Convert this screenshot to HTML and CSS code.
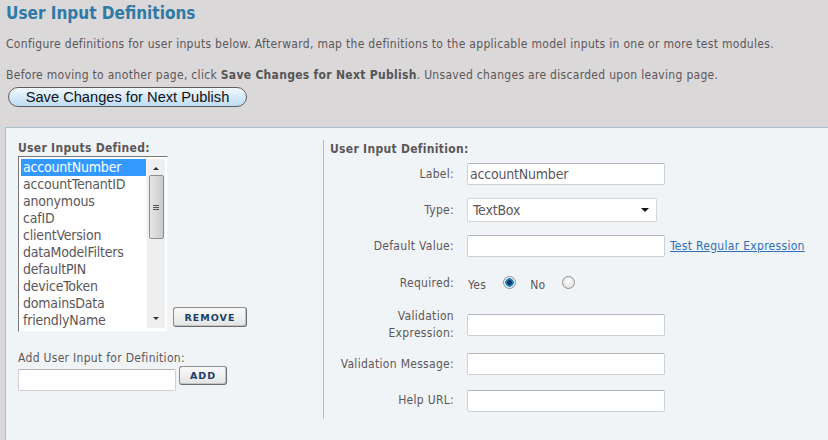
FILE: index.html
```html
<!DOCTYPE html>
<html lang="en">
<head>
<meta charset="utf-8">
<title>User Input Definitions</title>
<link rel="stylesheet" href="styles.css">
</head>
<body>
<header class="intro">
  <h1 class="title">User Input Definitions</h1>
  <p class="note">Configure definitions for user inputs below. Afterward, map the definitions to the applicable model inputs in one or more test modules.</p>
  <p class="note note-save">Before moving to another page, click <b>Save Changes for Next Publish</b>. Unsaved changes are discarded upon leaving page.</p>
  <button class="save-btn" type="button">Save Changes for Next Publish</button>
</header>

<section class="panel">
  <div class="col-left">
    <div class="heading">User Inputs Defined:</div>
    <div class="list-row">
      <div class="listbox">
        <ul class="items">
          <li class="item selected">accountNumber</li>
          <li class="item">accountTenantID</li>
          <li class="item">anonymous</li>
          <li class="item">cafID</li>
          <li class="item">clientVersion</li>
          <li class="item">dataModelFilters</li>
          <li class="item">defaultPIN</li>
          <li class="item">deviceToken</li>
          <li class="item">domainsData</li>
          <li class="item">friendlyName</li>
        </ul>
        <div class="scrollbar">
          <div class="arrow arrow-up"></div>
          <div class="thumb"><span class="grip"></span><span class="grip"></span><span class="grip"></span></div>
          <div class="track"></div>
          <div class="arrow arrow-down"></div>
        </div>
      </div>
      <button class="img-btn remove-btn" type="button">REMOVE</button>
    </div>
    <div class="add-label">Add User Input for Definition:</div>
    <div class="add-row">
      <input class="field add-field" type="text">
      <button class="img-btn add-btn" type="button">ADD</button>
    </div>
  </div>

  <div class="col-right">
    <div class="heading">User Input Definition:</div>
    <div class="form">
      <label class="lbl">Label:</label>
      <div class="ctl"><input class="field" type="text" value="accountNumber"></div>

      <label class="lbl">Type:</label>
      <div class="ctl"><div class="select"><span>TextBox</span><span class="caret"></span></div></div>

      <label class="lbl">Default Value:</label>
      <div class="ctl"><input class="field" type="text"><a class="link" href="#">Test Regular Expression</a></div>

      <label class="lbl">Required:</label>
      <div class="ctl radios">
        <span class="opt">Yes</span><span class="radio on"></span>
        <span class="opt">No</span><span class="radio"></span>
      </div>

      <label class="lbl">Validation<br>Expression:</label>
      <div class="ctl"><input class="field" type="text"></div>

      <label class="lbl">Validation Message:</label>
      <div class="ctl"><input class="field" type="text"></div>

      <label class="lbl">Help URL:</label>
      <div class="ctl"><input class="field" type="text"></div>
    </div>
  </div>
</section>
</body>
</html>
```
FILE: styles.css
```css
html, body {
  margin: 0;
  padding: 0;
}
body {
  background: #dad8d9;
  font-family: "DejaVu Sans Condensed", "DejaVu Sans", sans-serif;
  font-size: 12px;
  letter-spacing: 0.3px;
  color: #5b5759;
  overflow: hidden;
  width: 828px;
  height: 440px;
}
.intro {
  padding: 0 6px;
}
.title {
  margin: 3px 0 0;
  font-size: 17px;
  line-height: 20px;
  font-weight: bold;
  letter-spacing: 0;
  color: #2f7aa6;
}
.note {
  margin: 13px 0 0;
  line-height: 16px;
}
.note-save {
  margin-top: 15px;
}
.note b {
  color: #555;
}
.save-btn {
  display: block;
  margin: 4px 0 0 2px;
  width: 239px;
  height: 20px;
  padding: 0;
  border: 1px solid #5d5d5d;
  border-radius: 10px;
  background: linear-gradient(#f3f9fe 0%, #d9ebfa 45%, #bfdcf5 100%);
  font-family: "Liberation Sans", Arial, sans-serif;
  font-size: 14.67px;
  letter-spacing: 0;
  line-height: 18px;
  color: #111;
}

.panel {
  margin: 20px 0 0 5px;
  border: 1px solid #a9c0cf;
  border-right: none;
  background: #f1f4f7;
  height: 330px;
  display: flex;
}
.col-left {
  width: 305px;
  padding: 12px 0 0 12px;
}
.heading {
  font-weight: bold;
  line-height: 16px;
}
.list-row {
  display: flex;
  align-items: flex-end;
  gap: 5px;
}
.listbox {
  border: 1px solid #f4f4f4;
  border-top-color: #777;
  border-left-color: #777;
  background: #fff;
  display: flex;
  padding: 2px 0 0 2px;
  box-sizing: content-box;
  width: 146px;
  height: 172px;
}
.items {
  list-style: none;
  margin: 0;
  padding: 0;
  width: 125px;
  font-size: 14px;
  letter-spacing: -0.2px;
  line-height: 17px;
}
.item {
  padding-left: 2px;
  height: 17px;
  white-space: nowrap;
}
.item.selected {
  background: #3399ff;
  color: #fff;
}
.scrollbar {
  width: 18px;
  height: 169px;
  background: #efefef;
  border-left: 1px solid #fafafa;
  display: flex;
  flex-direction: column;
  align-items: center;
}
.arrow {
  width: 0;
  height: 0;
  border-left: 3px solid transparent;
  border-right: 3px solid transparent;
}
.arrow-up {
  margin: 8px 0 5px;
  border-bottom: 3px solid #333;
}
.arrow-down {
  margin: 0 0 8px;
  border-top: 3px solid #333;
}
.thumb {
  width: 15px;
  height: 64px;
  border: 1px solid #8e8e8e;
  border-radius: 2px;
  background: linear-gradient(90deg, #e6e6e6, #d6d6d6 60%, #c9c9c9);
  display: flex;
  flex-direction: column;
  align-items: center;
  justify-content: center;
  gap: 1px;
  box-sizing: border-box;
}
.grip {
  width: 6px;
  height: 1px;
  background: #555;
}
.track {
  flex: 1;
}
.img-btn {
  padding: 0;
  border: 1px solid #8d8d8d;
  border-right-color: #6c6c6c;
  border-bottom-color: #6c6c6c;
  border-radius: 3px;
  background: linear-gradient(#fafafa, #e4e4e4);
  box-shadow: inset -1px -1px 0 #c4c4c4;
  font-family: "DejaVu Sans", sans-serif;
  font-weight: bold;
  font-size: 9.5px;
  letter-spacing: 1px;
  color: #1b3e66;
}
.remove-btn {
  width: 74px;
  height: 20px;
  margin-bottom: 5px;
}
.add-label {
  margin-top: 18px;
  line-height: 16px;
}
.add-row {
  display: flex;
  align-items: flex-start;
  gap: 3px;
  margin-top: 3px;
}
.field {
  box-sizing: border-box;
  width: 198px;
  height: 22px;
  margin: 0;
  padding: 0 2px;
  border: 1px solid #cfd0d4;
  border-top-color: #b3b3b9;
  border-radius: 2px;
  background: #fff;
  font-family: "DejaVu Sans Condensed", "DejaVu Sans", sans-serif;
  font-size: 14px;
  letter-spacing: -0.2px;
  color: #5b5759;
}
.add-field {
  width: 158px;
}
.add-btn {
  width: 48px;
  height: 19px;
  margin-top: -3px;
}

.col-right {
  margin-top: 12px;
  height: 278px;
  border-left: 1px solid #a9c0d4;
  padding: 1px 0 0 6px;
  flex: 1;
}
.form {
  margin-top: 6px;
  display: grid;
  grid-template-columns: 124px auto;
  grid-template-rows: 22px 24px 22px 26px 31px 22px 25px;
  column-gap: 13px;
  row-gap: 13px;
  align-items: center;
}
.lbl {
  text-align: right;
  line-height: 17px;
}
.ctl {
  display: flex;
  align-items: center;
}
.select {
  box-sizing: border-box;
  width: 190px;
  height: 24px;
  border: 1px solid #d6d6d9;
  border-radius: 2px;
  background: #fff;
  display: flex;
  align-items: center;
  justify-content: space-between;
  padding: 0 7px 0 5px;
  font-size: 14px;
  letter-spacing: -0.2px;
}
.caret {
  width: 0;
  height: 0;
  border-left: 4px solid transparent;
  border-right: 4px solid transparent;
  border-top: 4px solid #111;
}
.link {
  margin-left: 5px;
  color: #2b6fb6;
  text-decoration: underline;
}
.radios {
  padding-top: 3px;
}
.opt {
  margin-left: 1px;
  margin-right: 17px;
}
.opt + .radio + .opt {
  margin-left: 14px;
  margin-right: 17px;
}
.radio {
  box-sizing: border-box;
  width: 13px;
  height: 13px;
  border-radius: 50%;
  border: 1px solid #8f8f8f;
  background: radial-gradient(circle at 50% 40%, #fefefe, #d8d8d8);
  margin-top: -5px;
}
.radio.on {
  background: radial-gradient(circle, #0a3a66 0 2px, #1f7fc2 3px 4px, #f2f2f2 4.5px);
}
```
